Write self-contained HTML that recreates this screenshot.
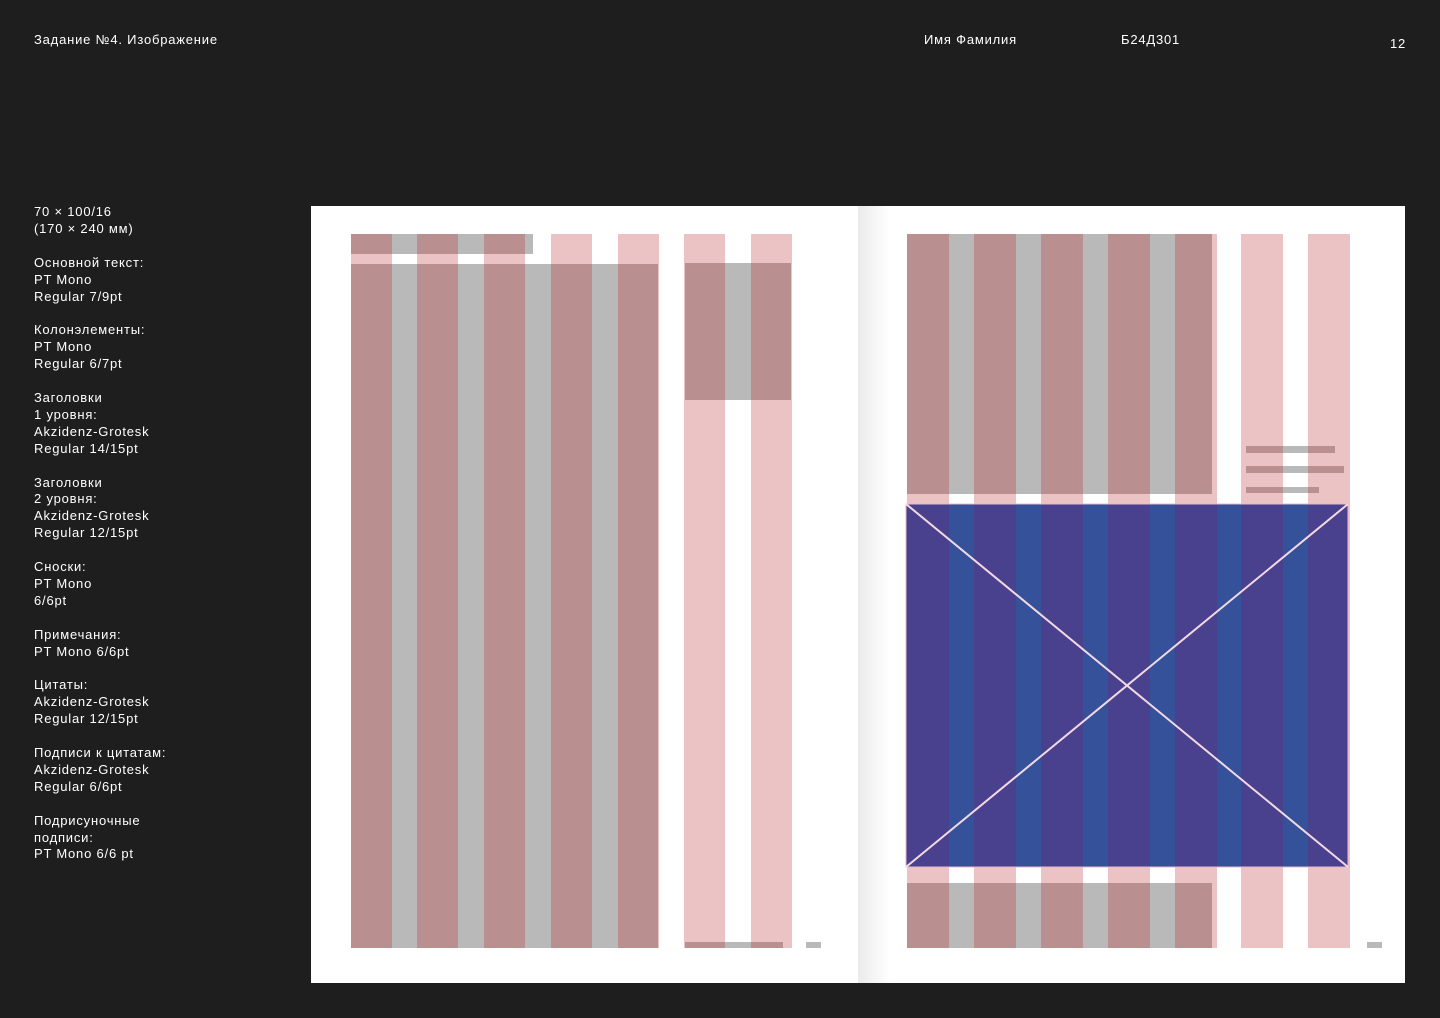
<!DOCTYPE html>
<html><head><meta charset="utf-8"><style>
body{margin:0;width:1440px;height:1018px;background:#1e1e1e;position:relative;overflow:hidden;font-family:"Liberation Sans",sans-serif;color:#fff;font-size:13px;letter-spacing:0.8px}
.t{position:absolute;line-height:16.9px;white-space:nowrap}
</style></head><body>
<div class="t" style="left:34px;top:32px">Задание №4. Изображение</div>
<div class="t" style="left:924px;top:32px">Имя Фамилия</div>
<div class="t" style="left:1121px;top:32px">Б24Д301</div>
<div class="t" style="left:1390px;top:36px">12</div>
<div class="t" style="left:34px;top:204px">70 × 100/16<br>(170 × 240 мм)<br><br>Основной текст:<br>PT Mono<br>Regular 7/9pt<br><br>Колонэлементы:<br>PT Mono<br>Regular 6/7pt<br><br>Заголовки<br>1 уровня:<br>Akzidenz-Grotesk<br>Regular 14/15pt<br><br>Заголовки<br>2 уровня:<br>Akzidenz-Grotesk<br>Regular 12/15pt<br><br>Сноски:<br>PT Mono<br>6/6pt<br><br>Примечания:<br>PT Mono 6/6pt<br><br>Цитаты:<br>Akzidenz-Grotesk<br>Regular 12/15pt<br><br>Подписи к цитатам:<br>Akzidenz-Grotesk<br>Regular 6/6pt<br><br>Подрисуночные<br>подписи:<br>PT Mono 6/6 pt</div>
<svg style="position:absolute;left:0;top:0" width="1440" height="1018">
<defs><linearGradient id="g" x1="0" x2="1"><stop offset="0" stop-color="#ebebeb"/><stop offset="1" stop-color="#fff"/></linearGradient>
<clipPath id="cl"><rect x="351" y="264" width="307" height="684"/><rect x="351" y="234" width="182" height="20"/><rect x="685" y="263" width="106" height="137"/><rect x="685" y="942" width="98" height="6"/></clipPath>
<clipPath id="cr"><rect x="907" y="234" width="305" height="260"/><rect x="907" y="883" width="305" height="65"/><rect x="1246" y="446" width="89" height="7"/><rect x="1246" y="466" width="98" height="7"/><rect x="1246" y="487" width="73" height="6"/></clipPath>
<clipPath id="cb"><rect x="906" y="504" width="442" height="363"/></clipPath>
</defs>
<rect x="311" y="206" width="1094" height="777" fill="#fff"/>
<rect x="858" y="206" width="32" height="777" fill="url(#g)"/>
<g fill="#ecc3c4">
<rect x="351" y="234" width="41" height="714"/><rect x="417" y="234" width="41" height="714"/><rect x="484" y="234" width="41" height="714"/><rect x="551" y="234" width="41" height="714"/><rect x="618" y="234" width="41" height="714"/><rect x="684" y="234" width="41" height="714"/><rect x="751" y="234" width="41" height="714"/>
<rect x="907" y="234" width="42" height="714"/><rect x="974" y="234" width="42" height="714"/><rect x="1041" y="234" width="42" height="714"/><rect x="1108" y="234" width="42" height="714"/><rect x="1175" y="234" width="42" height="714"/><rect x="1241" y="234" width="42" height="714"/><rect x="1308" y="234" width="42" height="714"/>
</g>
<g clip-path="url(#cl)"><rect x="340" y="220" width="480" height="740" fill="#b8b9b8"/><g fill="#b98f8f">
<rect x="351" y="234" width="41" height="714"/><rect x="417" y="234" width="41" height="714"/><rect x="484" y="234" width="41" height="714"/><rect x="551" y="234" width="41" height="714"/><rect x="618" y="234" width="41" height="714"/><rect x="684" y="234" width="41" height="714"/><rect x="751" y="234" width="41" height="714"/></g></g>
<g clip-path="url(#cr)"><rect x="900" y="220" width="460" height="740" fill="#b8b9b8"/><g fill="#b98f8f">
<rect x="907" y="234" width="42" height="714"/><rect x="974" y="234" width="42" height="714"/><rect x="1041" y="234" width="42" height="714"/><rect x="1108" y="234" width="42" height="714"/><rect x="1175" y="234" width="42" height="714"/><rect x="1241" y="234" width="42" height="714"/><rect x="1308" y="234" width="42" height="714"/></g></g>
<g clip-path="url(#cb)"><rect x="900" y="500" width="460" height="370" fill="#34519a"/><g fill="#4a418e">
<rect x="906" y="234" width="43" height="714"/><rect x="974" y="234" width="42" height="714"/><rect x="1041" y="234" width="42" height="714"/><rect x="1108" y="234" width="42" height="714"/><rect x="1175" y="234" width="42" height="714"/><rect x="1241" y="234" width="42" height="714"/><rect x="1308" y="234" width="42" height="714"/></g></g>
<rect x="906" y="504" width="442" height="363" fill="none" stroke="#e9b8c8" stroke-width="1"/>
<line x1="906" y1="504" x2="1348" y2="867" stroke="#f3d9e4" stroke-width="2"/>
<line x1="906" y1="867" x2="1348" y2="504" stroke="#f3d9e4" stroke-width="2"/>
<rect x="806" y="942" width="15" height="6" fill="#b8b9b8"/>
<rect x="1367" y="942" width="15" height="6" fill="#b8b9b8"/>
</svg>
</body></html>
